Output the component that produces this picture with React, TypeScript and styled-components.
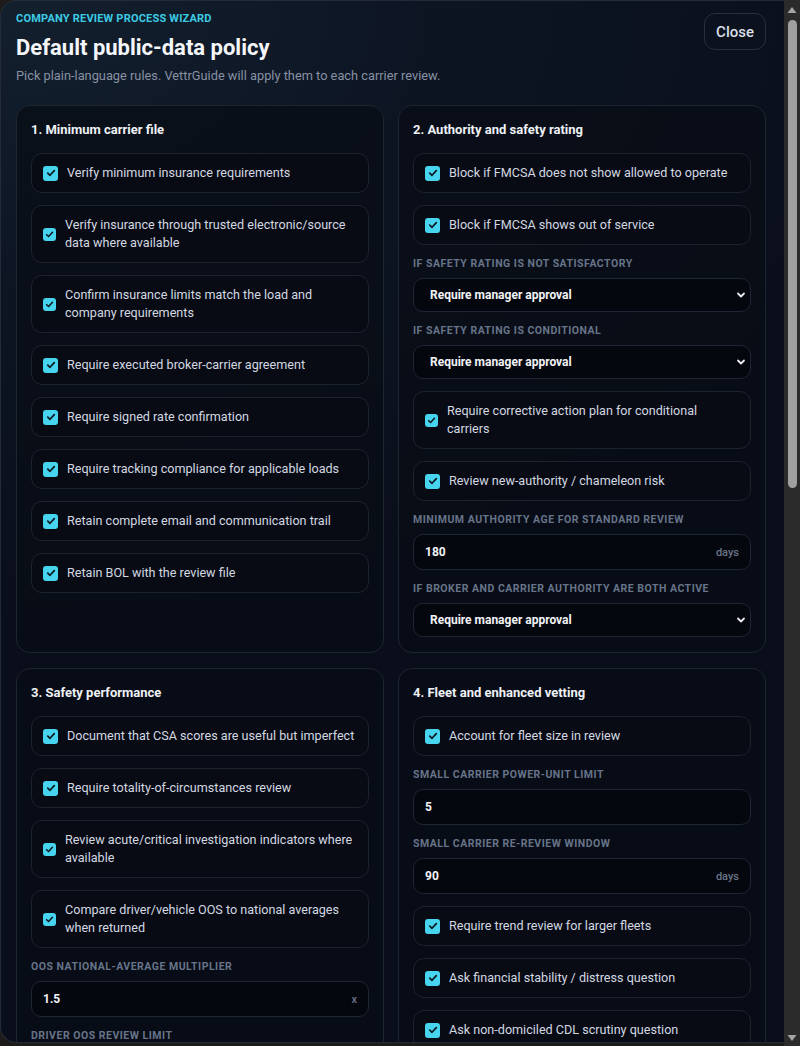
import React from "react";
import styled, { createGlobalStyle } from "styled-components";

const Global = createGlobalStyle`
  html, body { margin: 0; padding: 0; background: #1d1c1b; }
  body { font-family: Roboto, "Noto Sans", "DejaVu Sans", sans-serif; -webkit-font-smoothing: antialiased; }
  * { box-sizing: border-box; }
`;

const Page = styled.div`
  display: flex;
  width: 800px;
  height: 1046px;
  overflow: hidden;
`;

const Modal = styled.div`
  flex: 1;
  height: 1043px;
  border: 1px solid #232b38;
  border-right: none;
  border-radius: 16px 0 0 16px;
  overflow: hidden;
  background: radial-gradient(120% 60% at 0% 0%, #13202e 0%, #0d1523 45%, #0a0e1a 100%);
  padding: 11px 18px 24px 15px;
  color: #d8dde6;
`;

const ScrollTrack = styled.div`
  flex: none;
  width: 16px;
  height: 1046px;
  background: #2b2b2b;
  display: flex;
  flex-direction: column;
  align-items: center;
`;

const ScrollArrow = styled.svg`
  flex: none;
  display: block;
`;

const ScrollBody = styled.div`
  flex: 1;
  width: 100%;
  display: flex;
  flex-direction: column;
  align-items: center;
  padding-top: 3px;
`;

const Thumb = styled.div`
  width: 9px;
  height: 468px;
  border-radius: 5px;
  background: #a0a0a0;
`;

const Header = styled.header`
  display: flex;
  justify-content: space-between;
  align-items: flex-start;
  margin-bottom: 20px;
`;

const HeadText = styled.div`
  display: flex;
  flex-direction: column;
`;

const Eyebrow = styled.div`
  font-size: 11px;
  line-height: 14px;
  font-weight: 700;
  letter-spacing: 0.2px;
  color: #3ccbe4;
  text-transform: uppercase;
  margin-bottom: 8px;
`;

const Title = styled.h1`
  margin: 0;
  font-size: 22px;
  line-height: 28px;
  font-weight: 700;
  color: #f4f6f9;
`;

const Subtitle = styled.p`
  margin: 5px 0 0;
  font-size: 12.8px;
  line-height: 18px;
  color: #8791a3;
`;

const CloseButton = styled.button`
  font-family: inherit;
  height: 37px;
  padding: 0 11px;
  border-radius: 11px;
  border: 1px solid #283040;
  background: #0c121d;
  color: #d9dee7;
  font-size: 15px;
  font-weight: 500;
  margin-top: 1px;
`;

const Grid = styled.div`
  display: grid;
  grid-template-columns: 1fr 1fr;
  gap: 15px 14px;
`;

const Card = styled.section`
  background: rgba(9, 12, 21, 0.72);
  border: 1px solid #1e2531;
  border-radius: 14px;
  padding: 15px 14px 15px;
  display: flex;
  flex-direction: column;
`;

const CardTitle = styled.h2`
  margin: 0 0 15px;
  font-size: 13px;
  line-height: 17px;
  font-weight: 700;
  color: #eef1f5;
`;

const Stack = styled.div`
  display: flex;
  flex-direction: column;
  gap: 12px;
`;

const Item = styled.label`
  display: flex;
  align-items: center;
  gap: 9px;
  padding: 10px 11px;
  background: #080b14;
  border: 1px solid #1c2230;
  border-radius: 11px;
  font-size: 12.6px;
  line-height: 18px;
  color: #d3d8e1;
`;

const Box = styled.span<{ $small?: boolean }>`
  flex: none;
  width: ${(p) => (p.$small ? 13 : 15)}px;
  height: ${(p) => (p.$small ? 13 : 15)}px;
  border-radius: 3px;
  background: #46d4ee;
  display: flex;
  align-items: center;
  justify-content: center;
`;

const Field = styled.div`
  display: flex;
  flex-direction: column;
  gap: 7px;
`;

const FieldLabel = styled.div`
  font-size: 10.5px;
  line-height: 14px;
  font-weight: 700;
  letter-spacing: 0.5px;
  text-transform: uppercase;
  color: #677489;
`;

const SelectBox = styled.div`
  position: relative;
  height: 34px;
  display: flex;
  align-items: center;
  padding: 0 16px;
  background: #05070e;
  border: 1px solid #1e2533;
  border-radius: 10px;
  font-size: 12px;
  font-weight: 700;
  color: #f1f3f6;
`;

const Chevron = styled.svg`
  position: absolute;
  right: 4px;
  top: 50%;
  margin-top: -5px;
`;

const InputBox = styled.div`
  height: 36px;
  display: flex;
  align-items: center;
  justify-content: space-between;
  padding: 0 11px;
  background: #05070e;
  border: 1px solid #1e2533;
  border-radius: 10px;
  font-size: 12px;
  font-weight: 700;
  color: #f1f3f6;
`;

const Suffix = styled.span`
  font-size: 11px;
  font-weight: 500;
  color: #6a7588;
`;

type Entry =
  | { kind: "check"; text: string; small?: boolean }
  | { kind: "select"; label: string; value: string }
  | { kind: "input"; label: string; value: string; suffix?: string };

const Check = ({ small }: { small?: boolean }) => (
  <Box $small={small}>
    <svg width={small ? 9 : 10} height={small ? 9 : 10} viewBox="0 0 10 10">
      <path d="M1.8 5.2 L4 7.3 L8.3 2.6" fill="none" stroke="#0c1720" strokeWidth="1.7" strokeLinecap="round" strokeLinejoin="round" />
    </svg>
  </Box>
);

const renderEntry = (e: Entry, i: number) => {
  if (e.kind === "check")
    return (
      <Item key={i}>
        <Check small={e.small} />
        <span>{e.text}</span>
      </Item>
    );
  if (e.kind === "select")
    return (
      <Field key={i}>
        <FieldLabel>{e.label}</FieldLabel>
        <SelectBox>
          {e.value}
          <Chevron width="10" height="10" viewBox="0 0 10 10">
            <path d="M2 3.5 L5 6.5 L8 3.5" fill="none" stroke="#e8ebf0" strokeWidth="1.8" strokeLinecap="round" strokeLinejoin="round" />
          </Chevron>
        </SelectBox>
      </Field>
    );
  return (
    <Field key={i}>
      <FieldLabel>{e.label}</FieldLabel>
      <InputBox>
        <span>{e.value}</span>
        {e.suffix && <Suffix>{e.suffix}</Suffix>}
      </InputBox>
    </Field>
  );
};

const sections: { title: string; entries: Entry[] }[] = [
  {
    title: "1. Minimum carrier file",
    entries: [
      { kind: "check", text: "Verify minimum insurance requirements" },
      { kind: "check", text: "Verify insurance through trusted electronic/source data where available", small: true },
      { kind: "check", text: "Confirm insurance limits match the load and company requirements", small: true },
      { kind: "check", text: "Require executed broker-carrier agreement" },
      { kind: "check", text: "Require signed rate confirmation" },
      { kind: "check", text: "Require tracking compliance for applicable loads" },
      { kind: "check", text: "Retain complete email and communication trail" },
      { kind: "check", text: "Retain BOL with the review file" },
    ],
  },
  {
    title: "2. Authority and safety rating",
    entries: [
      { kind: "check", text: "Block if FMCSA does not show allowed to operate" },
      { kind: "check", text: "Block if FMCSA shows out of service" },
      { kind: "select", label: "If safety rating is not satisfactory", value: "Require manager approval" },
      { kind: "select", label: "If safety rating is conditional", value: "Require manager approval" },
      { kind: "check", text: "Require corrective action plan for conditional carriers", small: true },
      { kind: "check", text: "Review new-authority / chameleon risk" },
      { kind: "input", label: "Minimum authority age for standard review", value: "180", suffix: "days" },
      { kind: "select", label: "If broker and carrier authority are both active", value: "Require manager approval" },
    ],
  },
  {
    title: "3. Safety performance",
    entries: [
      { kind: "check", text: "Document that CSA scores are useful but imperfect" },
      { kind: "check", text: "Require totality-of-circumstances review" },
      { kind: "check", text: "Review acute/critical investigation indicators where available", small: true },
      { kind: "check", text: "Compare driver/vehicle OOS to national averages when returned", small: true },
      { kind: "input", label: "OOS national-average multiplier", value: "1.5", suffix: "x" },
      { kind: "input", label: "Driver OOS review limit", value: "8", suffix: "%" },
      { kind: "input", label: "Vehicle OOS review limit", value: "30", suffix: "%" },
    ],
  },
  {
    title: "4. Fleet and enhanced vetting",
    entries: [
      { kind: "check", text: "Account for fleet size in review" },
      { kind: "input", label: "Small carrier power-unit limit", value: "5" },
      { kind: "input", label: "Small carrier re-review window", value: "90", suffix: "days" },
      { kind: "check", text: "Require trend review for larger fleets" },
      { kind: "check", text: "Ask financial stability / distress question" },
      { kind: "check", text: "Ask non-domiciled CDL scrutiny question" },
      { kind: "check", text: "Ask double-brokering / load-control question" },
    ],
  },
];

export default function App() {
  return (
    <>
      <Global />
      <Page>
        <Modal>
          <Header>
            <HeadText>
              <Eyebrow>Company review process wizard</Eyebrow>
              <Title>Default public-data policy</Title>
              <Subtitle>Pick plain-language rules. VettrGuide will apply them to each carrier review.</Subtitle>
            </HeadText>
            <CloseButton>Close</CloseButton>
          </Header>
          <Grid>
            {sections.map((s) => (
              <Card key={s.title}>
                <CardTitle>{s.title}</CardTitle>
                <Stack>{s.entries.map(renderEntry)}</Stack>
              </Card>
            ))}
          </Grid>
        </Modal>
        <ScrollTrack>
          <ScrollArrow width="16" height="17" viewBox="0 0 16 17">
            <path d="M3.5 13 L8 7 L12.5 13 Z" fill="#a3a3a3" />
          </ScrollArrow>
          <ScrollBody>
            <Thumb />
          </ScrollBody>
          <ScrollArrow width="16" height="14" viewBox="0 0 16 14">
            <path d="M3.5 3 L8 9 L12.5 3 Z" fill="#a3a3a3" />
          </ScrollArrow>
        </ScrollTrack>
      </Page>
    </>
  );
}
